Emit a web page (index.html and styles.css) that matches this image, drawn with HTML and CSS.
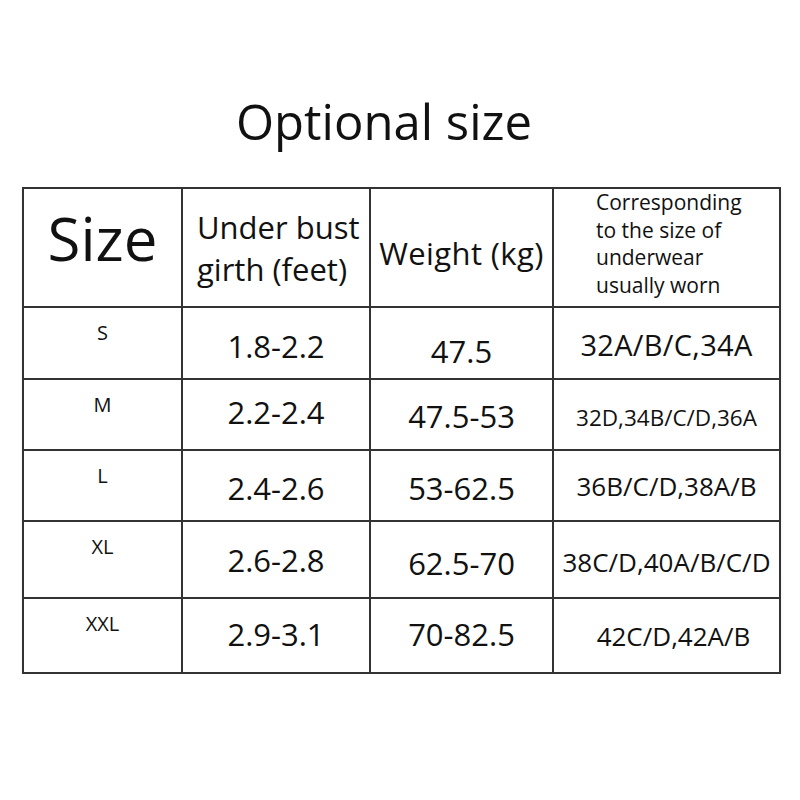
FILE: index.html
```html
<!DOCTYPE html>
<html>
<head>
<meta charset="utf-8">
<link rel="stylesheet" href="styles.css">
</head>
<body>
<div class="page">
  <h1 class="title">Optional size</h1>
  <table class="sizes">
    <colgroup>
      <col class="c1"><col class="c2"><col class="c3"><col class="c4">
    </colgroup>
    <tr class="head">
      <th class="h-size">Size</th>
      <th class="h-girth">Under bust<br>girth (feet)</th>
      <th class="h-weight">Weight (kg)</th>
      <th class="h-corr">Corresponding<br>to the size of<br>underwear<br>usually worn</th>
    </tr>
    <tr class="r1">
      <td class="lbl">S</td>
      <td class="val d6">1.8-2.2</td>
      <td class="val d16">47.5</td>
      <td class="bra big d4">32A/B/C,34A</td>
    </tr>
    <tr class="r2">
      <td class="lbl">M</td>
      <td class="val u5">2.2-2.4</td>
      <td class="val d3">47.5-53</td>
      <td class="bra sm d7">32D,34B/C/D,36A</td>
    </tr>
    <tr class="r3">
      <td class="lbl">L</td>
      <td class="val d5">2.4-2.6</td>
      <td class="val d5">53-62.5</td>
      <td class="bra">36B/C/D,38A/B</td>
    </tr>
    <tr class="r4">
      <td class="lbl">XL</td>
      <td class="val">2.6-2.8</td>
      <td class="val d7">62.5-70</td>
      <td class="bra d5">38C/D,40A/B/C/D</td>
    </tr>
    <tr class="r5">
      <td class="lbl">XXL</td>
      <td class="val u3">2.9-3.1</td>
      <td class="val u3">70-82.5</td>
      <td class="bra shift">42C/D,42A/B</td>
    </tr>
  </table>
</div>
</body>
</html>
```
FILE: styles.css
```css
html, body {
  margin: 0;
  padding: 0;
  background: #fff;
}
body {
  font-family: "Open Sans", "Noto Sans", sans-serif;
  color: #111;
}
.page {
  width: 800px;
  padding-top: 93px;
}
.title {
  margin: 0 0 0 -32px;
  text-align: center;
  font-weight: 400;
  font-size: 49px;
  line-height: 56px;
  height: 94px;
}
.sizes {
  margin-left: 22px;
  border-collapse: collapse;
  table-layout: fixed;
  width: 757px;
  border: 2px solid #333;
  box-shadow: 0 3px 3px rgba(0, 0, 0, 0.08);
}
.sizes th, .sizes td {
  border: 2px solid #333;
  padding: 0;
  font-weight: 400;
  text-align: center;
  vertical-align: middle;
}
.c1 { width: 159px; }
.c2 { width: 188px; }
.c3 { width: 183px; }
.c4 { width: 227px; }
.head { height: 119px; }
.r1 { height: 72px; }
.r2 { height: 71px; }
.r3 { height: 71px; }
.r4 { height: 77px; }
.r5 { height: 75px; }

.sizes .h-size {
  font-size: 60px;
  line-height: 66px;
  padding-bottom: 20px;
}
.sizes .h-girth {
  font-size: 31px;
  line-height: 42px;
  text-align: left;
  padding-left: 14px;
}
.sizes .h-weight {
  font-size: 31px;
  line-height: 38px;
  padding-top: 11px;
  letter-spacing: 0.4px;
}
.sizes .h-corr {
  font-size: 21px;
  line-height: 27.5px;
  text-align: left;
  padding-left: 42px;
  padding-bottom: 7px;
}
.sizes .lbl {
  vertical-align: top;
  font-size: 20px;
  line-height: 20px;
  padding-top: 15px;
}
.sizes .val {
  font-size: 31px;
  line-height: 36px;
}
.sizes .bra {
  font-size: 26px;
  line-height: 30px;
}
.sizes .bra.big { font-size: 29px; letter-spacing: 0.3px; }
.sizes .bra.sm { font-size: 22.5px; }
.sizes .bra.shift { padding-left: 14px; }

.sizes .d3 { padding-top: 3px; }
.sizes .d4 { padding-top: 4px; }
.sizes .d5 { padding-top: 5px; }
.sizes .d6 { padding-top: 6px; }
.sizes .d7 { padding-top: 7px; }
.sizes .d16 { padding-top: 16px; }
.sizes .u3 { padding-bottom: 3px; }
.sizes .u5 { padding-bottom: 5px; }
```
